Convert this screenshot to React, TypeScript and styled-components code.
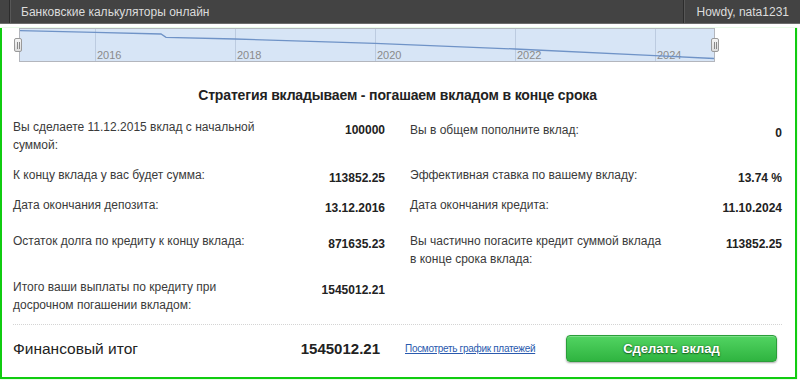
import React from "react";
import styled, { createGlobalStyle } from "styled-components";

const Global = createGlobalStyle`
  html, body { margin: 0; padding: 0; background: #ffffff; }
  body { font-family: "Liberation Sans", Arial, sans-serif; }
  * { box-sizing: border-box; }
`;

const Page = styled.div`
  width: 800px;
  height: 388px;
  overflow: hidden;
  background: #ffffff;
`;

const TopBar = styled.div`
  height: 24px;
  display: flex;
  align-items: stretch;
  background: #434343;
  border-bottom: 1px solid #6c6c6c;
  color: #dcdcdc;
  font-size: 12px;
`;

const Stub = styled.div`
  width: 10px;
  border-right: 1px solid #2c2c2c;
`;

const BarTitle = styled.div`
  flex: 1;
  display: flex;
  align-items: center;
  padding-left: 10px;
  border-left: 1px solid #575757;
`;

const UserBox = styled.div`
  display: flex;
  align-items: center;
  padding: 0 11px 0 12px;
  border-left: 1px solid #2c2c2c;
  box-shadow: inset 1px 0 0 #575757;
`;

const Frame = styled.div`
  width: 797px;
  border: 2px solid #10cc10;
  border-top: none;
  padding: 0 13px 15px 11px;
  box-shadow: 0 0 1px #7ee87e;
`;

const ChartBox = styled.div`
  position: relative;
  margin: 4px 0 0 6px;
  width: 696px;
  height: 34px;
  border: 1px solid #b3b6bd;
  background: #d7e5f6;
`;

const Handle = styled.div<{ $side: "left" | "right" }>`
  position: absolute;
  top: 9px;
  ${(p) => (p.$side === "left" ? "left: -6px;" : "right: -5px;")}
  width: 8px;
  height: 14px;
  background: linear-gradient(#f4f4f4, #dcdcdc);
  border: 1px solid #9a9a9a;
  border-radius: 2px;
  display: flex;
  justify-content: center;
  align-items: center;
  gap: 1px;
  &::before, &::after {
    content: "";
    width: 1px;
    height: 7px;
    background: #888;
  }
`;

const Heading = styled.h2`
  margin: 24px 0 0 0;
  font-size: 14px;
  line-height: 18px;
  letter-spacing: -0.15px;
  font-weight: bold;
  color: #222;
  text-align: center;
`;

const Grid = styled.div`
  margin-top: 15px;
  display: grid;
  grid-template-columns: 372px 372px;
  grid-template-rows: 48px 30px 36px 46px 36px;
  column-gap: 25px;
`;

const Cell = styled.div<{ $shift?: number }>`
  display: flex;
  justify-content: space-between;
  align-items: flex-start;
  padding-top: ${(p) => p.$shift ?? 0}px;
`;

const Label = styled.div`
  width: 254px;
  font-size: 12px;
  line-height: 17.5px;
  color: #3a3a3a;
`;

const Value = styled.div`
  padding-top: 3px;
  font-size: 12px;
  line-height: 17.5px;
  font-weight: bold;
  color: #222;
  text-align: right;
  white-space: nowrap;
`;

const Divider = styled.div`
  margin-top: 9px;
  border-top: 1px dotted #d4d4d4;
`;

const Footer = styled.div`
  margin-top: 10px;
  height: 27px;
  display: grid;
  grid-template-columns: 367px 186px 211px;
  align-items: center;
`;

const Total = styled.div`
  display: flex;
  justify-content: space-between;
  align-items: center;
`;

const TotalLabel = styled.span`
  font-size: 15.5px;
  color: #222;
`;

const TotalValue = styled.span`
  font-size: 15px;
  font-weight: bold;
  color: #222;
`;

const Link = styled.a`
  margin-left: 25px;
  font-size: 10px;
  letter-spacing: -0.3px;
  color: #2a5aae;
  text-decoration: underline;
  cursor: pointer;
  white-space: nowrap;
`;

const Button = styled.button`
  height: 27px;
  width: 211px;
  border: 1px solid #2b9e3a;
  border-radius: 4px;
  background: linear-gradient(#52d462, #2fb440);
  box-shadow: 0 1px 2px rgba(0, 0, 0, 0.35), inset 0 1px 0 rgba(255, 255, 255, 0.25);
  color: #ffffff;
  font-family: "Liberation Sans", Arial, sans-serif;
  font-size: 13px;
  font-weight: bold;
  text-shadow: 0 0 2px #1b6a26, 0 1px 1px #1b6a26;
  cursor: pointer;
`;

type Row = { label: string; value: string; shift?: number };

const left: Row[] = [
  { label: "Вы сделаете 11.12.2015 вклад с начальной суммой:", value: "100000" },
  { label: "К концу вклада у вас будет сумма:", value: "113852.25" },
  { label: "Дата окончания депозита:", value: "13.12.2016" },
  { label: "Остаток долга по кредиту к концу вклада:", value: "871635.23" },
  { label: "Итого ваши выплаты по кредиту при досрочном погашении вкладом:", value: "1545012.21" },
];

const right: (Row | null)[] = [
  { label: "Вы в общем пополните вклад:", value: "0", shift: 3 },
  { label: "Эффективная ставка по вашему вкладу:", value: "13.74 %" },
  { label: "Дата окончания кредита:", value: "11.10.2024" },
  { label: "Вы частично погасите кредит суммой вклада в конце срока вклада:", value: "113852.25" },
  null,
];

const Chart = () => {
  const grid = [75, 215, 355, 495, 635];
  const years = ["2016", "2018", "2020", "2022", "2024"];
  return (
    <svg width="694" height="32" viewBox="0 0 694 32" style={{ display: "block" }}>
      {grid.map((x) => (
        <line key={x} x1={x + 0.5} y1={0} x2={x + 0.5} y2={32} stroke="#bccbe0" strokeWidth={1} />
      ))}
      {years.map((y, i) => (
        <text
          key={y}
          x={grid[i] + 2}
          y={30}
          fontFamily="Liberation Sans, Arial, sans-serif"
          fontSize={11}
          fill="#8a8a8a"
        >
          {y}
        </text>
      ))}
      <polyline
        points="0,1.7 75,3.3 141,5 146,8.3 215,10 355,14.3 495,20 635,26.7 694,29.5"
        fill="none"
        stroke="#6f93c7"
        strokeWidth={1.3}
      />
    </svg>
  );
};

export default function App() {
  return (
    <Page>
      <Global />
      <TopBar>
        <Stub />
        <BarTitle>Банковские калькуляторы онлайн</BarTitle>
        <UserBox>Howdy, nata1231</UserBox>
      </TopBar>
      <Frame>
        <ChartBox>
          <Chart />
          <Handle $side="left" />
          <Handle $side="right" />
        </ChartBox>
        <Heading>Стратегия вкладываем - погашаем вкладом в конце срока</Heading>
        <Grid>
          {left.map((l, i) => {
            const r = right[i];
            return (
              <React.Fragment key={i}>
                <Cell $shift={l.shift}>
                  <Label>{l.label}</Label>
                  <Value>{l.value}</Value>
                </Cell>
                {r ? (
                  <Cell $shift={r.shift}>
                    <Label>{r.label}</Label>
                    <Value>{r.value}</Value>
                  </Cell>
                ) : (
                  <div />
                )}
              </React.Fragment>
            );
          })}
        </Grid>
        <Divider />
        <Footer>
          <Total>
            <TotalLabel>Финансовый итог</TotalLabel>
            <TotalValue>1545012.21</TotalValue>
          </Total>
          <Link>Посмотреть график платежей</Link>
          <Button>Сделать вклад</Button>
        </Footer>
      </Frame>
    </Page>
  );
}
